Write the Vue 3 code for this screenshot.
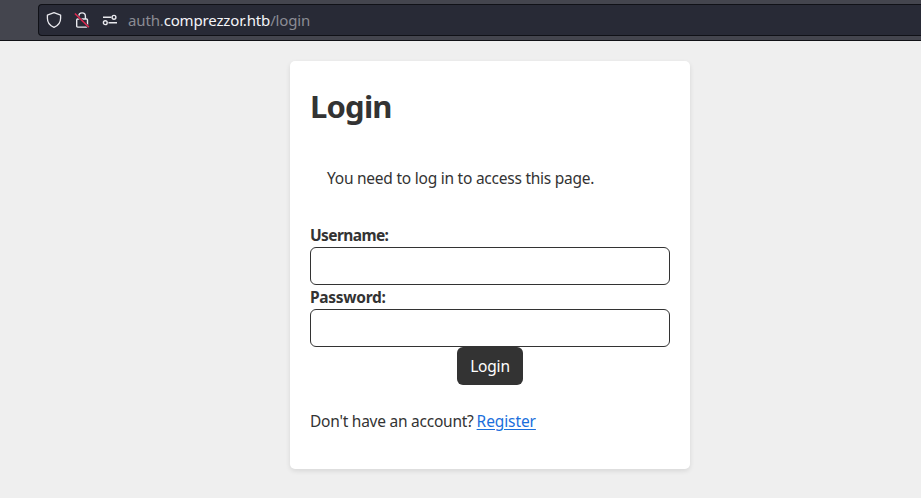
<script setup>
import { ref } from 'vue'

const username = ref('')
const password = ref('')
</script>

<template>
  <div class="window">
    <header class="toolbar">
      <div class="urlbar">
        <svg class="icon" viewBox="0 0 16 16" fill="none" stroke="#e9e9ee" stroke-width="1.3" stroke-linejoin="round">
          <path d="M8 .7 14.6 3.1V6.2C14.6 10.5 12.1 13.7 8 15.3 3.9 13.7 1.4 10.5 1.4 6.2V3.1Z" />
        </svg>
        <svg class="icon lock" viewBox="0 0 16 16" fill="none" stroke="#e9e9ee" stroke-width="1.4" stroke-linejoin="round">
          <path d="M4.8 7V4.2C4.8 2.2 6 .9 8.1 .9S11.4 2.2 11.4 4.2V7" />
          <rect x="2.7" y="7" width="10.8" height="8.1" rx="1" />
          <path d="M.9 1.5 14.9 15.3" stroke="#282a36" stroke-width="2.4" />
          <path d="M.9 1.5 14.9 15.3" stroke="#e22850" stroke-width="1.5" />
        </svg>
        <svg class="icon sliders" viewBox="0 0 16 16" fill="none" stroke="#e9e9ee" stroke-width="1.4">
          <path d="M1 5.3H9.3M6.5 10.7H15" />
          <circle cx="12" cy="5.3" r="1.9" />
          <circle cx="3.3" cy="10.7" r="1.9" />
        </svg>
        <span class="url">auth.<span class="domain">comprezzor.htb</span>/login</span>
      </div>
    </header>
    <main class="page">
      <section class="card">
        <h1>Login</h1>
        <p class="notice">You need to log in to access this page.</p>
        <form @submit.prevent>
          <label class="name-label" for="username">Username:</label>
          <input id="username" v-model="username" type="text" />
          <label class="pass-label" for="password">Password:</label>
          <input id="password" v-model="password" type="password" />
          <button type="submit">Login</button>
        </form>
        <p class="signup"><span>Don't have an account?</span><a href="#">Register</a></p>
      </section>
    </main>
  </div>
</template>

<style>
body {
  margin: 0;
  background: #efefef;
}
</style>

<style scoped>
.window {
  height: 498px;
  overflow: hidden;
  background: #efefef;
  color: #333;
  font: 15.5px/24px "Noto Sans", sans-serif;
  letter-spacing: -0.24px;
}
.toolbar {
  box-sizing: border-box;
  height: 41px;
  padding: 4px 0 0 38px;
  background: #44454e;
  border-bottom: 1px solid #101116;
}
.urlbar {
  box-sizing: border-box;
  height: 32px;
  display: flex;
  align-items: center;
  padding-left: 7px;
  background: #282a36;
  border: 1px solid #101117;
  border-right: 0;
  border-radius: 4px 0 0 4px;
}
.icon {
  width: 16px;
  height: 16px;
  flex: none;
  margin-right: 12px;
}
.icon.sliders {
  margin-right: 10px;
}
.url {
  color: #8b8c94;
  font-size: 15px;
  line-height: 20px;
  letter-spacing: -0.15px;
  white-space: nowrap;
}
.domain {
  color: #f5f5f8;
}
.page {
  display: flex;
  justify-content: center;
  padding: 20px 0 0 59px;
}
.card {
  box-sizing: border-box;
  width: 400px;
  height: 408px;
  padding: 20px;
  background: #fff;
  border-radius: 5px;
  box-shadow: 0 2px 5px rgba(0, 0, 0, 0.1);
}
h1 {
  margin: 5px 0 0;
  font-size: 31px;
  line-height: 40px;
  font-weight: 700;
  letter-spacing: -0.8px;
}
.notice {
  margin: 40px 0 33px 17px;
  white-space: nowrap;
}
form {
  display: flex;
  flex-direction: column;
}
label {
  height: 24px;
  font-weight: 700;
  align-self: flex-start;
}
.name-label {
  letter-spacing: -0.6px;
}
.pass-label {
  letter-spacing: -0.3px;
}
input {
  box-sizing: border-box;
  width: 360px;
  height: 38px;
  padding: 6px 12px;
  border: 1px solid #333;
  border-radius: 6px;
  background: #fff;
  color: #333;
  font: inherit;
}
button {
  align-self: center;
  width: 66px;
  height: 38px;
  padding: 0;
  border: 0;
  border-radius: 6px;
  background: #333;
  color: #fff;
  font: inherit;
  letter-spacing: -0.2px;
}
.signup {
  display: flex;
  gap: 3px;
  margin: 24px 0 0;
  white-space: nowrap;
}
.signup a {
  color: #1a6fdc;
  letter-spacing: -0.1px;
  text-decoration: underline;
  text-underline-offset: 2px;
}
</style>
